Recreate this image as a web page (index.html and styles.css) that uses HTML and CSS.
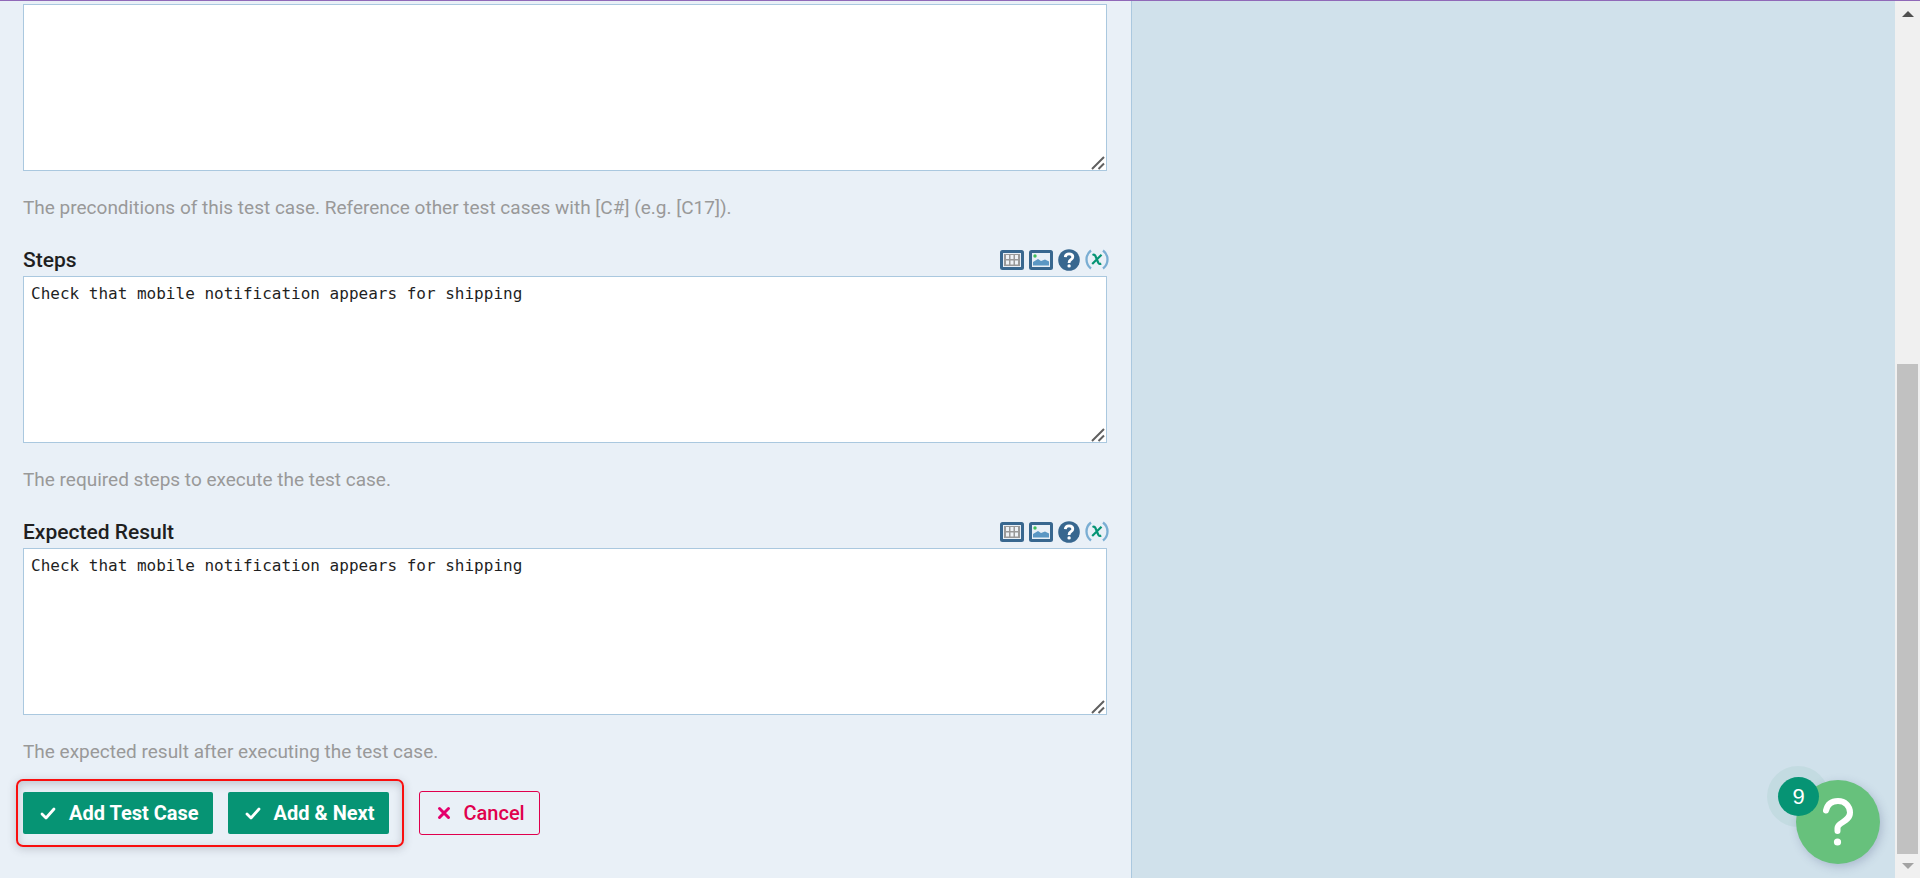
FILE: index.html
```html
<!DOCTYPE html>
<html lang="en">
<head>
<meta charset="utf-8">
<title>Add Test Case</title>
<link rel="stylesheet" href="styles.css">
</head>
<body>
<svg class="sprite" aria-hidden="true">
  <symbol id="i-table" viewBox="0 0 24 20">
    <rect width="24" height="20" rx="2.5" fill="#38678f"/>
    <rect x="3" y="3" width="18" height="14" fill="#e9f0f7"/>
    <rect x="4" y="4" width="16" height="12" fill="#999"/>
    <path d="M6 5h3v4H6zM10.500 5h3v4h-3zM15 5h3v4h-3zM6 10.500h3v4H6zM10.500 10.500h3v4h-3zM15 10.500h3v4h-3z" fill="#eef2f6"/>
  </symbol>
  <symbol id="i-image" viewBox="0 0 24 20">
    <rect width="24" height="20" rx="2.500" fill="#38678f"/>
    <rect x="3" y="3" width="18" height="14" fill="#e9f0f7"/>
    <circle cx="6" cy="6" r="1.700" fill="#3fbf5a"/>
    <path d="M4 15.500V12l5-3 3 2 4-1.500 4 2v4z" fill="#5b97c4"/>
  </symbol>
  <symbol id="i-help" viewBox="0 0 22 22">
    <circle cx="11" cy="11" r="10.800" fill="#38678f"/>
    <path d="M7.300 8.200Q7.500 4.800 11 4.800q3.800 0 3.800 3.200 0 1.700-2 2.800-1.700 1-1.700 2.700v.5" fill="none" stroke="#fff" stroke-width="2.800"/>
    <circle cx="11.100" cy="16.900" r="1.700" fill="#fff"/>
  </symbol>
  <symbol id="i-var" viewBox="0 0 24 22">
    <path d="M6 1.500Q1.500 5 1.500 10.500T6 19.500M18 1.500q4.500 3.500 4.500 9T18 19.500" fill="none" stroke="#7aaed3" stroke-width="2.300"/>
    <path d="M7.500 6q2-.8 2.800.8l3 7q.8 1.600 2.900.6M16.500 5.800 7.200 15" fill="none" stroke="#069474" stroke-width="2.200"/>
  </symbol>
  <symbol id="i-check" viewBox="0 0 16 13">
    <path d="M2 7l4 4 8-9" fill="none" stroke="#fff" stroke-width="2.800" stroke-linecap="round" stroke-linejoin="round"/>
  </symbol>
  <symbol id="i-grip" viewBox="0 0 14 14">
    <path d="M1 13 13 1M7.500 13 13 7.500" stroke="#606060" stroke-width="2"/>
  </symbol>
</svg>

<div class="page">
  <main class="form">
    <div class="field">
      <div class="box">
        <textarea class="input" aria-label="Preconditions"></textarea>
        <svg class="grip"><use href="#i-grip"/></svg>
      </div>
      <p class="hint">The preconditions of this test case. Reference other test cases with [C#] (e.g. [C17]).</p>
    </div>

    <div class="field">
      <div class="head">
        <label class="label" for="steps">Steps</label>
        <div class="tools">
          <button class="tool" type="button" aria-label="Insert table"><svg class="wide"><use href="#i-table"/></svg></button>
          <button class="tool" type="button" aria-label="Insert image"><svg class="wide"><use href="#i-image"/></svg></button>
          <button class="tool" type="button" aria-label="Formatting help"><svg class="round"><use href="#i-help"/></svg></button>
          <button class="tool" type="button" aria-label="Insert variable"><svg class="var"><use href="#i-var"/></svg></button>
        </div>
      </div>
      <div class="box">
        <textarea class="input" id="steps">Check that mobile notification appears for shipping</textarea>
        <svg class="grip"><use href="#i-grip"/></svg>
      </div>
      <p class="hint">The required steps to execute the test case.</p>
    </div>

    <div class="field">
      <div class="head">
        <label class="label" for="expected">Expected Result</label>
        <div class="tools">
          <button class="tool" type="button" aria-label="Insert table"><svg class="wide"><use href="#i-table"/></svg></button>
          <button class="tool" type="button" aria-label="Insert image"><svg class="wide"><use href="#i-image"/></svg></button>
          <button class="tool" type="button" aria-label="Formatting help"><svg class="round"><use href="#i-help"/></svg></button>
          <button class="tool" type="button" aria-label="Insert variable"><svg class="var"><use href="#i-var"/></svg></button>
        </div>
      </div>
      <div class="box">
        <textarea class="input" id="expected">Check that mobile notification appears for shipping</textarea>
        <svg class="grip"><use href="#i-grip"/></svg>
      </div>
      <p class="hint">The expected result after executing the test case.</p>
    </div>

    <div class="actions">
      <div class="marked">
        <button class="btn" type="submit"><svg class="check"><use href="#i-check"/></svg>Add Test Case</button>
        <button class="btn" type="submit"><svg class="check"><use href="#i-check"/></svg>Add &amp; Next</button>
      </div>
      <a class="btn cancel" href="#"><svg class="cross" viewBox="0 0 14 14"><path d="M2.500 2.500l9 9M11.500 2.500l-9 9" stroke="#e4006d" stroke-width="3" stroke-linecap="round"/></svg>Cancel</a>
    </div>
  </main>

  <aside class="side"></aside>

  <div class="scrollbar" aria-hidden="true">
    <svg class="arrow" viewBox="0 0 12 6"><path d="M0 6 6 0l6 6z" fill="#505050"/></svg>
    <div class="track"><div class="thumb"></div></div>
    <svg class="arrow" viewBox="0 0 12 6"><path d="M0 0h12L6 6z" fill="#a3a3a3"/></svg>
  </div>
</div>

<div class="support">
  <span class="halo"></span>
  <button class="bubble" type="button" aria-label="Open help">
    <svg class="mark" viewBox="0 0 30 48"><path d="M3 12.500C4.500 6 9 3 15 3c7 0 12 5 12 11.500C27 24 14.500 24 14.500 30v3" fill="none" stroke="#fff" stroke-width="6" stroke-linecap="round" stroke-linejoin="round"/><circle cx="14.500" cy="44" r="3.600" fill="#fff"/></svg>
  </button>
  <span class="count">9</span>
</div>
</body>
</html>
```
FILE: styles.css
```css
* { box-sizing: border-box; }

body {
  margin: 0;
  font-family: Roboto, "Liberation Sans", sans-serif;
  font-size: 19px;
  line-height: 24px;
  color: #1f1f1f;
}

.sprite { position: absolute; width: 0; height: 0; }
svg { display: block; flex: none; }

.page {
  display: grid;
  grid-template-columns: minmax(0, 1132fr) minmax(0, 763fr) 25px;
  min-height: 100vh;
  border-top: 1px solid #9069b8;
  background: #d0e1eb;
}

.form {
  padding: 3px 24px 24px 23px;
  background: #e9f0f7;
  border-right: 1px solid #aac8df;
}

.box { position: relative; }

.input {
  display: block;
  width: 100%;
  height: 167px;
  padding: 5px 7px;
  border: 1px solid #aac8df;
  border-radius: 0;
  background: #fff;
  color: #1f1f1f;
  font: 16px/24px "DejaVu Sans Mono", monospace;
  resize: none;
  outline: 0;
}

.grip {
  position: absolute;
  right: 2px;
  bottom: 1px;
  width: 14px;
  height: 14px;
}

.hint { margin: 25px 0 27px; color: #999; }

.head {
  display: flex;
  justify-content: space-between;
  height: 29px;
  padding-top: 1px;
}

.label { font-size: 21px; font-weight: 500; }

.tools {
  display: flex;
  align-items: center;
  gap: 5px;
  height: 24px;
  margin-right: -2px;
}

.tool {
  display: flex;
  padding: 0;
  border: 0;
  background: none;
  cursor: pointer;
}

.wide { width: 24px; height: 20px; }
.round { width: 22px; height: 22px; }
.var { width: 24px; height: 22px; }

.actions {
  display: flex;
  align-items: center;
  gap: 15px;
  margin: -12px 0 0 -7px;
}

.marked {
  display: flex;
  gap: 15px;
  padding: 11px 13px 11px 5px;
  border: 2px solid #f90f0f;
  border-radius: 7px;
  box-shadow: 0 2px 8px rgba(70, 70, 90, .25), inset 0 3px 8px rgba(70, 70, 90, .25);
}

.btn {
  display: flex;
  align-items: center;
  gap: 13px;
  height: 42px;
  padding: 0 14px 0 17px;
  border: 0;
  border-radius: 2px;
  background: #069474;
  color: #fff;
  font: 700 20px/24px Roboto, "Liberation Sans", sans-serif;
  text-decoration: none;
  white-space: nowrap;
  cursor: pointer;
}

.cancel {
  height: 44px;
  border: 1px solid #e0004d;
  border-radius: 3px;
  background: none;
  color: #e0004d;
  font-weight: 500;
}

.check { width: 16px; height: 13px; }
.cross { width: 14px; height: 14px; }

.scrollbar {
  display: flex;
  flex-direction: column;
  align-items: center;
  padding: 10px 0 9px;
  background: #f0f0f0;
}

.arrow { width: 12px; height: 6px; }

.track {
  flex: 1;
  display: flex;
  flex-direction: column;
  justify-content: flex-end;
  width: 21px;
  padding: 7px 0 9px;
}

.thumb { height: 59%; background: #c1c1c1; }

.support {
  position: fixed;
  right: 40px;
  bottom: 14px;
  width: 113px;
  height: 98px;
}

.halo {
  position: absolute;
  left: 0;
  top: 0;
  width: 62px;
  height: 61px;
  border-radius: 50%;
  background: #c3dbe1;
}

.bubble {
  position: absolute;
  right: 0;
  bottom: 0;
  display: flex;
  align-items: center;
  justify-content: center;
  width: 84px;
  height: 84px;
  padding: 0;
  border: 0;
  border-radius: 50%;
  background: #67c17c;
  box-shadow: 2px 3px 10px rgba(60, 70, 120, .25);
  cursor: pointer;
}

.mark { width: 30px; height: 48px; }

.count {
  position: absolute;
  left: 11px;
  top: 11px;
  width: 41px;
  height: 39px;
  border-radius: 50%;
  background: #069474;
  color: #fff;
  font: 22px/39px "Liberation Sans", sans-serif;
  text-align: center;
}
```
